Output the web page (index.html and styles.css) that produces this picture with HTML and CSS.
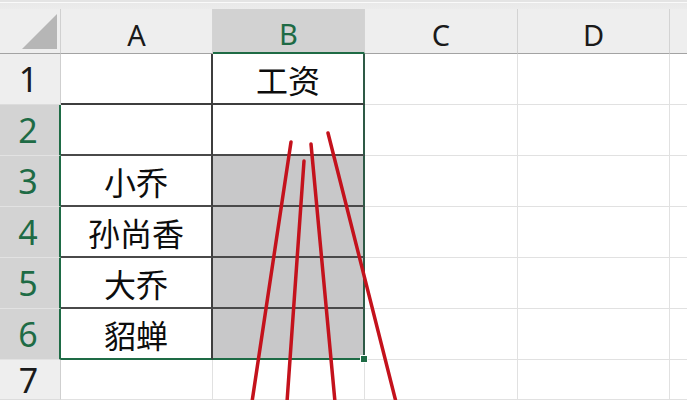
FILE: index.html
```html
<!DOCTYPE html>
<html lang="zh">
<head>
<meta charset="utf-8">
<title>Sheet</title>
<link rel="stylesheet" href="styles.css">
</head>
<body>
<div class="topbar"></div>
<div class="sheet">
  <div class="corner"><span class="tri"></span></div>
  <div class="colhead">A</div>
  <div class="colhead sel">B</div>
  <div class="colhead">C</div>
  <div class="colhead">D</div>
  <div class="colhead last"></div>

  <div class="rowhead">1</div>
  <div class="cell a1"></div>
  <div class="cell b1">工资</div>
  <div class="cell"></div>
  <div class="cell"></div>
  <div class="cell last"></div>

  <div class="rowhead sel">2</div>
  <div class="cell acol"></div>
  <div class="cell bcol"></div>
  <div class="cell"></div>
  <div class="cell"></div>
  <div class="cell last"></div>

  <div class="rowhead sel">3</div>
  <div class="cell acol">小乔</div>
  <div class="cell bcol fill"></div>
  <div class="cell"></div>
  <div class="cell"></div>
  <div class="cell last"></div>

  <div class="rowhead sel">4</div>
  <div class="cell acol">孙尚香</div>
  <div class="cell bcol fill"></div>
  <div class="cell"></div>
  <div class="cell"></div>
  <div class="cell last"></div>

  <div class="rowhead sel">5</div>
  <div class="cell acol">大乔</div>
  <div class="cell bcol fill"></div>
  <div class="cell"></div>
  <div class="cell"></div>
  <div class="cell last"></div>

  <div class="rowhead sel">6</div>
  <div class="cell acol bottom">貂蝉</div>
  <div class="cell bcol fill bottom"><span class="handle"></span></div>
  <div class="cell"></div>
  <div class="cell"></div>
  <div class="cell last"></div>

  <div class="rowhead r7">7</div>
  <div class="cell"></div>
  <div class="cell"></div>
  <div class="cell"></div>
  <div class="cell"></div>
  <div class="cell last"></div>
</div>
<svg class="annot" width="687" height="400" viewBox="0 0 687 400">
  <g stroke="#c4121c" stroke-width="3.5" stroke-linecap="round" fill="none">
    <line x1="291" y1="142" x2="252" y2="402"/>
    <line x1="304" y1="161" x2="287" y2="402"/>
    <line x1="311" y1="144" x2="335" y2="402"/>
    <line x1="328" y1="133" x2="396" y2="402"/>
  </g>
</svg>
</body>
</html>
```

FILE: styles.css
```css
html, body {
  margin: 0;
  padding: 0;
  background: #ffffff;
  overflow: hidden;
}
body {
  width: 687px;
  height: 400px;
  position: relative;
  font-family: "Noto Sans", "Noto Sans CJK SC", sans-serif;
}
.topbar {
  height: 9px;
  background: linear-gradient(#e4e4e4 0, #e4e4e4 2px, #fafafa 2px, #fafafa 3px, #e9e9e9 3px, #ececec 9px);
}
.sheet {
  display: grid;
  grid-template-columns: 61px 152px 152px 153px 152px 1fr;
  grid-template-rows: 45px repeat(6, 51px) 40px;
}
.sheet > div {
  box-sizing: border-box;
  display: flex;
  align-items: center;
  justify-content: center;
}
.corner {
  background: #eeeeee;
  border-right: 1px solid #d0d0d0;
  border-bottom: 1px solid #a3a3a3;
  justify-content: flex-end !important;
  align-items: flex-end !important;
  padding: 0 3px 4px 0;
}
.tri {
  display: block;
  width: 35px;
  height: 35px;
  background: #b6b6b6;
  clip-path: polygon(100% 0, 100% 100%, 0 100%);
}
.colhead {
  background: #eeeeee;
  border-right: 1px solid #d3d3d3;
  border-bottom: 1px solid #a3a3a3;
  font-size: 29px;
  color: #1a1a1a;
  padding-top: 6px;
}
.colhead.sel {
  background: #d2d2d2;
  color: #1e6b45;
  border-bottom: 2px solid #1e6b45;
}
.colhead.last {
  border-right: none;
}
.rowhead {
  background: #eeeeee;
  border-right: 1px solid #cfcfcf;
  border-bottom: 1px solid #dcdcdc;
  font-size: 34px;
  line-height: 1;
  color: #1a1a1a;
  padding-right: 3px;
}
.rowhead.r7 {
  align-items: flex-end !important;
  padding-bottom: 2px;
}
.rowhead.sel {
  background: #d3d3d3;
  color: #1e6b45;
  border-right: 2px solid #1e6b45;
  border-bottom: 1px solid #e2e2e2;
}
.cell {
  background: #ffffff;
  border-right: 1px solid #e1e1e1;
  border-bottom: 1px solid #e1e1e1;
  font-family: "Noto Sans CJK SC", "Noto Sans", sans-serif;
  font-size: 32px;
  color: #0d0d0d;
}
.cell.last {
  border-right: none;
}
.cell.a1 {
  border-right: 2px solid #3e3e3e;
  border-bottom: 2px solid #3e3e3e;
}
.cell.b1 {
  border-right: 2px solid #2e5a46;
  border-bottom: 2px solid #3e3e3e;
}
.cell.acol {
  border-right: 2px solid #3e3e3e;
  border-bottom: 2px solid #4a4a4a;
}
.cell.bcol {
  border-right: 2px solid #2e5a46;
  border-bottom: 2px solid #4a4a4a;
}
.cell.fill {
  background: #c8c8c9;
}
.cell.bottom {
  border-bottom: 2px solid #1e6b45;
  position: relative;
}
.handle {
  position: absolute;
  right: -5px;
  bottom: -5px;
  width: 6px;
  height: 6px;
  background: #1e6b45;
  border: 1px solid #ffffff;
}
.annot {
  position: absolute;
  left: 0;
  top: 0;
  pointer-events: none;
}
```
